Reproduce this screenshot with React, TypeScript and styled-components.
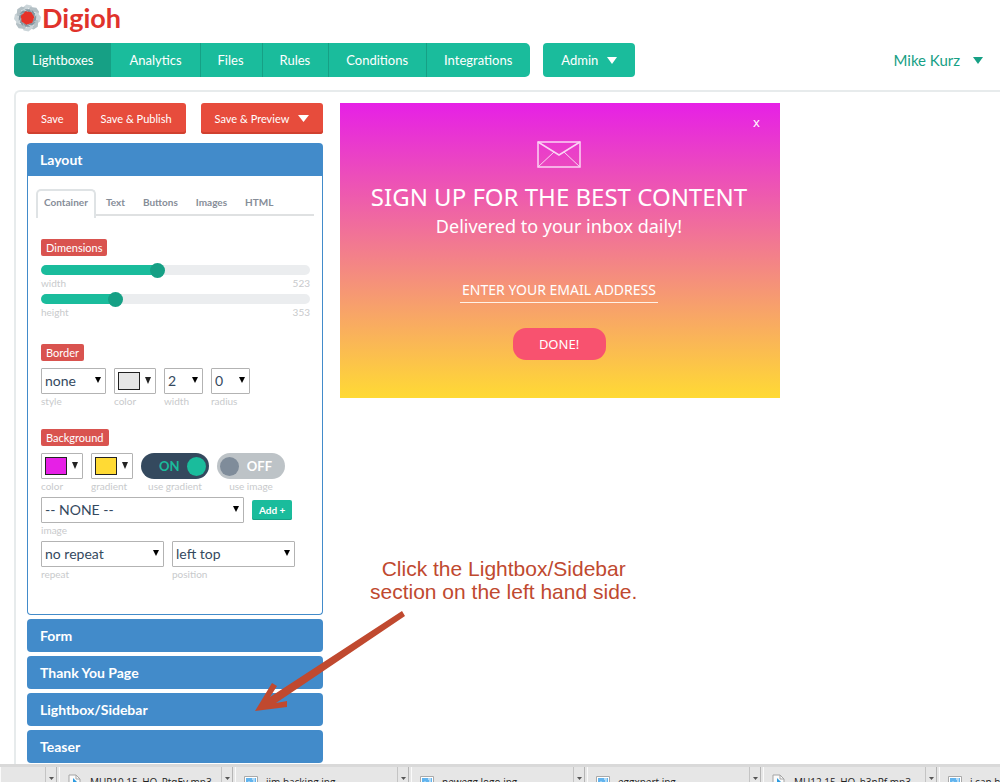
import React, { useState } from "react";
import styled, { createGlobalStyle } from "styled-components";

const GlobalStyle = createGlobalStyle`
  * { box-sizing: border-box; }
  body { margin: 0; background: #fff; color: #34495e; font-family: Lato, "Liberation Sans", sans-serif; }
  button, input, select { font-family: inherit; margin: 0; }
`;

const Window = styled.div`
  display: flex;
  flex-direction: column;
  height: 100vh;
  overflow: hidden;
`;

const Page = styled.div`
  flex: 1;
  min-height: 0;
  display: flex;
  flex-direction: column;
  padding-left: 14px;
  overflow: hidden;
`;

const Brand = styled.a`
  display: flex;
  align-items: center;
  gap: 1px;
  height: 35px;
  flex: none;
  color: #e0322b;
  font-size: 27px;
  line-height: 35px;
  font-weight: 700;
  text-decoration: none;
`;

const NavBar = styled.header`
  display: flex;
  flex: none;
  align-items: center;
  gap: 13px;
  margin: 8px 17px 13px 0;
`;

const NavGroup = styled.nav`
  display: flex;
  border-radius: 5px;
  overflow: hidden;
`;

const NavLink = styled.a<{ $active?: boolean }>`
  padding: 0 18px;
  line-height: 34px;
  font-size: 13px;
  color: #fff;
  text-decoration: none;
  background: ${(p) => (p.$active ? "#16a085" : "#1abc9c")};
  & + & + & { border-left: 1px solid #16a085; padding-left: 17px; }
`;

const AdminButton = styled.button`
  display: flex;
  align-items: center;
  gap: 9px;
  height: 34px;
  padding: 0 18px;
  border: 0;
  border-radius: 4px;
  background: #1abc9c;
  color: #fff;
  font-size: 13px;
`;

const UserButton = styled.button`
  display: flex;
  align-items: center;
  gap: 13px;
  margin-left: auto;
  padding: 0;
  border: 0;
  background: none;
  color: #16a085;
  font-size: 15px;
`;

const Workspace = styled.main`
  position: relative;
  flex: 1;
  display: flex;
  align-items: flex-start;
  gap: 17px;
  padding: 11px 0 0 11px;
  border: 2px solid #e7ebec;
  border-width: 2px 0 0 2px;
  border-radius: 6px 0 0 0;
`;

const Sidebar = styled.aside`
  flex: none;
  width: 296px;
`;

const Actions = styled.div`
  display: flex;
  margin-bottom: 9px;
`;

const ActionButton = styled.button<{ $gap?: number }>`
  display: flex;
  align-items: center;
  justify-content: center;
  gap: 9px;
  height: 31px;
  margin-left: ${(p) => p.$gap ?? 0}px;
  padding: 0 14px 1px;
  border: 0;
  border-radius: 3px;
  background: #e74c3c;
  box-shadow: inset 0 -2px 0 #d0402f;
  color: #fff;
  font-size: 11px;
  white-space: nowrap;
`;

const Section = styled.section`
  margin-bottom: 4px;
`;

const SectionHeader = styled.button<{ $open?: boolean }>`
  display: block;
  width: 100%;
  height: 33px;
  padding: 0 13px;
  border: 0;
  border-radius: ${(p) => (p.$open ? "4px 4px 0 0" : "4px")};
  background: #428bca;
  color: #fff;
  font-size: 14px;
  font-weight: 700;
  text-align: left;
`;

const SectionBody = styled.div`
  padding: 13px 12px 29px 13px;
  border: 1px solid #428bca;
  border-top: 0;
  border-radius: 0 0 4px 4px;
`;

const Tabs = styled.div`
  display: flex;
  gap: 2px;
  margin: 0 -4px 23px -5px;
  align-items: flex-start;
  box-shadow: inset 0 -2px 0 #dfe1e2;
  height: 27px;
`;

const Tab = styled.button<{ $active?: boolean }>`
  height: 29px;
  padding: 0 ${(p) => (p.$active ? 6 : 8)}px ${(p) => (p.$active ? 6 : 4)}px;
  border: 2px solid #dfe3e5;
  border-width: ${(p) => (p.$active ? "2px 2px 0" : "0")};
  border-radius: 5px 5px 0 0;
  background: ${(p) => (p.$active ? "#fff" : "none")};
  color: #868d98;
  font-size: 10px;
  font-weight: 700;
`;

const Badge = styled.h3`
  width: fit-content;
  margin: 0 0 7px;
  padding: 0 5px;
  border-radius: 2px;
  background: #d9534f;
  color: #fff;
  font-size: 11px;
  line-height: 17px;
  font-weight: 400;
`;

const Group = styled.div<{ $space: number }>`
  margin-bottom: ${(p) => p.$space}px;
`;

const Sliders = styled.div`
  display: flex;
  flex-direction: column;
  gap: 4px;
  padding-top: 2px;
`;

const SliderLabel = styled.label`
  display: block;
  color: #c8cacc;
  font-size: 10px;
  line-height: 14px;
`;

const SliderCaption = styled.span`
  display: flex;
  justify-content: space-between;
  padding-top: 1px;
`;

const Range = styled.input`
  appearance: none;
  display: block;
  width: 100%;
  height: 10px;
  border-radius: 5px;
  background: linear-gradient(to right, #1abc9c var(--fill), #ebedef var(--fill));
  &::-webkit-slider-thumb {
    appearance: none;
    width: 15px;
    height: 15px;
    border-radius: 50%;
    background: #16a085;
  }
`;

const FieldRow = styled.div`
  display: flex;
  align-items: flex-start;
  gap: 8px;
  margin-bottom: 4px;
`;

const FieldLabel = styled.label<{ $width: number; $center?: boolean }>`
  display: block;
  width: ${(p) => p.$width}px;
  color: #c8cacc;
  font-size: 10px;
  line-height: 14px;
  text-align: ${(p) => (p.$center ? "center" : "left")};
`;

const ControlBox = styled.span`
  position: relative;
  display: block;
  & > svg { position: absolute; right: 5px; top: 9px; pointer-events: none; }
`;

const SelectBox = styled.select`
  appearance: none;
  display: block;
  width: 100%;
  height: 26px;
  padding: 0 3px 1px;
  border: 1px solid #b3b3b3;
  border-radius: 1px;
  background: #fff;
  color: #34495e;
  font-size: 14px;
`;

const ColorButton = styled.button`
  display: flex;
  align-items: center;
  width: 100%;
  height: 26px;
  padding: 0 3px;
  border: 1px solid #b3b3b3;
  border-radius: 1px;
  background: #fff;
`;

const Swatch = styled.span<{ $color: string }>`
  width: 22px;
  height: 18px;
  border: 1px solid #222;
  background: ${(p) => p.$color};
`;

const SwitchTrack = styled.span<{ $on: boolean }>`
  position: relative;
  display: flex;
  align-items: center;
  justify-content: space-between;
  flex-direction: ${(p) => (p.$on ? "row" : "row-reverse")};
  height: 26px;
  padding: ${(p) => (p.$on ? "0 3px 0 18px" : "0 13px 0 3px")};
  border-radius: 13px;
  background: ${(p) => (p.$on ? "#34495e" : "#bdc3c7")};
  color: ${(p) => (p.$on ? "#1abc9c" : "#fff")};
  font-size: 13px;
  font-weight: 700;
`;

const SwitchInput = styled.input`
  position: absolute;
  inset: 0;
  width: 100%;
  height: 100%;
  opacity: 0;
`;

const SwitchKnob = styled.span<{ $on: boolean }>`
  width: 19px;
  height: 19px;
  border-radius: 50%;
  background: ${(p) => (p.$on ? "#1abc9c" : "#7f8c9a")};
`;

const AddButton = styled.button`
  height: 20px;
  margin-top: 3px;
  padding: 0 7px;
  border: 0;
  border-radius: 2px;
  background: #1abc9c;
  box-shadow: inset 0 -1px 0 #16a085;
  color: #fff;
  font-size: 10px;
  font-weight: 700;
`;

const Popup = styled.form`
  position: relative;
  display: flex;
  flex-direction: column;
  align-items: center;
  width: 440px;
  padding: 38px 21px 38px 19px;
  background: linear-gradient(#e620e6, #ffda34);
  color: #fff;
  font-family: "Noto Sans", "Open Sans", sans-serif;
`;

const CloseButton = styled.button`
  position: absolute;
  top: 10px;
  right: 20px;
  padding: 0;
  border: 0;
  background: none;
  color: #fff;
  font-size: 13px;
  line-height: 18px;
`;

const PopupTitle = styled.h1`
  margin: 13px 0 0;
  font-size: 24px;
  line-height: 32px;
  font-weight: 400;
  white-space: nowrap;
`;

const PopupText = styled.p`
  margin: 0;
  font-size: 18px;
  line-height: 26px;
`;

const EmailInput = styled.input`
  width: 198px;
  height: 27px;
  margin: 37px 0 25px;
  padding: 0;
  border: 0;
  border-bottom: 1px solid #fff2e6;
  background: none;
  color: #fff;
  font-size: 14px;
  text-align: center;
  &::placeholder { color: #fff; opacity: 1; }
`;

const DoneButton = styled.button`
  width: 93px;
  height: 32px;
  border: 0;
  border-radius: 13px;
  background: #f8526f;
  color: #fff;
  font-size: 13px;
`;

const Note = styled.p`
  position: absolute;
  left: 354px;
  top: 465px;
  margin: 0;
  color: #c0492f;
  font-family: "Liberation Sans", sans-serif;
  font-size: 21px;
  line-height: 23px;
  text-align: center;
  white-space: nowrap;
`;

const NoteArrow = styled.svg`
  position: absolute;
  left: 236px;
  top: 516px;
  pointer-events: none;
`;

const Shelf = styled.footer`
  display: flex;
  flex: none;
  height: 18px;
  border-top: 3px solid #d9d9d9;
  background: #e6e6e6;
  overflow: hidden;
`;

const ShelfItem = styled.div`
  display: flex;
  flex: none;
  align-items: center;
  gap: 8px;
  width: 174px;
  height: 30px;
  margin-right: 2px;
  padding-left: 8px;
  border-left: 1px solid #fafafa;
  border-right: 1px solid #b5b5b5;
  color: #222;
  font-family: "Open Sans", "Noto Sans", sans-serif;
  font-size: 10px;
  line-height: 16px;
  white-space: nowrap;
  & > svg { flex: none; }
`;

const ShelfTail = styled(ShelfItem)`
  width: 57px;
`;

const ShelfMenu = styled.button`
  display: flex;
  flex: none;
  justify-content: center;
  width: 11px;
  height: 30px;
  margin-left: auto;
  padding: 10px 0 0;
  border: 0;
  border-left: 1px solid #c4c4c4;
  background: none;
`;

function Caret({ width, height, color }: { width: number; height: number; color: string }) {
  return (
    <svg width={width} height={height} viewBox="0 0 10 10" preserveAspectRatio="none" fill={color} aria-hidden="true">
      <path d="M0 0H10L5 10Z" />
    </svg>
  );
}

function Logo() {
  const turns = [0, 45, 90, 135, 180, 225, 270, 315];
  return (
    <svg width="27" height="28" viewBox="-14 -14 28 28" aria-hidden="true">
      {turns.map((t, i) => (
        <path key={t} d="M-6 -10L-1 -14L4 -13L6 -9L1 -10L-1 -5L-5 -6Z" fill={i % 2 ? "#b4c0c5" : "#cbd5d9"} transform={`rotate(${t})`} />
      ))}
      {turns.map((t) => (
        <path key={t} d="M-3 -9L2 -9L5 -5L1 -6Z" fill="#8496a0" transform={`rotate(${t})`} />
      ))}
      <path d="M-2 -7L4 -6L7 -1L5 5L-1 7L-6 4L-7 -2Z" fill="#e63329" />
    </svg>
  );
}

function Slider({ name, start }: { name: string; start: number }) {
  const min = 85;
  const max = 1105;
  const [value, setValue] = useState(start);
  const fill = { "--fill": `${((value - min) / (max - min)) * 100}%` } as React.CSSProperties;
  return (
    <SliderLabel>
      <Range type="range" min={min} max={max} value={value} style={fill} onChange={(e) => setValue(Number(e.target.value))} />
      <SliderCaption><span>{name}</span><span>{value}</span></SliderCaption>
    </SliderLabel>
  );
}

function Select({ label, value, width }: { label: string; value: string; width: number }) {
  return (
    <FieldLabel $width={width}>
      <ControlBox>
        <SelectBox defaultValue={value}><option>{value}</option></SelectBox>
        <Caret width={6} height={6} color="#000" />
      </ControlBox>
      {label}
    </FieldLabel>
  );
}

function ColorPicker({ label, color }: { label: string; color: string }) {
  return (
    <FieldLabel $width={42}>
      <ControlBox>
        <ColorButton type="button" aria-label={label}><Swatch $color={color} /></ColorButton>
        <Caret width={6} height={7} color="#222" />
      </ControlBox>
      {label}
    </FieldLabel>
  );
}

function Switch({ label, start }: { label: string; start: boolean }) {
  const [on, setOn] = useState(start);
  return (
    <FieldLabel $width={68} $center>
      <SwitchTrack $on={on}>
        <SwitchInput type="checkbox" checked={on} onChange={() => setOn(!on)} />
        <span>{on ? "ON" : "OFF"}</span>
        <SwitchKnob $on={on} />
      </SwitchTrack>
      {label}
    </FieldLabel>
  );
}

function FileIcon({ audio }: { audio: boolean }) {
  return audio ? (
    <svg width="14" height="16" viewBox="0 0 14 16" aria-hidden="true">
      <path d="M1 1H8L12 5V15H1Z" fill="#fbfbfb" stroke="#a5a5a5" />
      <path d="M8 1V5H12" fill="none" stroke="#a5a5a5" />
      <path d="M5 4L9 8L7 8V12H4V10H5Z" fill="#2d9be0" />
    </svg>
  ) : (
    <svg width="14" height="12" viewBox="0 0 14 12" aria-hidden="true">
      <path d="M0.500 0.500H13.500V11.500H0.500Z" fill="#fff" stroke="#a9a9a9" />
      <path d="M2 2H12V8H2Z" fill="#62b4ee" />
      <path d="M8 3H11M9 5H11" stroke="#fff" />
      <path d="M2 8L5 5L8 8Z" fill="#c6e6fa" />
    </svg>
  );
}

const navItems = ["Lightboxes", "Analytics", "Files", "Rules", "Conditions", "Integrations"];
const tabs = ["Container", "Text", "Buttons", "Images", "HTML"];
const closedSections = ["Form", "Thank You Page", "Lightbox/Sidebar", "Teaser"];
const downloads = ["MUP10.15_HQ_PtqEy.mp3", "jim backing.jpg", "newegg logo.jpg", "eggxpert.jpg", "MU12.15_HQ_h3nRf.mp3", "i can has.jpg"];

export default function App() {
  return (
    <Window>
      <GlobalStyle />
      <Page>
        <Brand href="#"><Logo />Digioh</Brand>
        <NavBar>
          <NavGroup>
            {navItems.map((item, i) => <NavLink href="#" key={item} $active={i === 0}>{item}</NavLink>)}
          </NavGroup>
          <AdminButton>Admin <Caret width={10} height={7} color="#fff" /></AdminButton>
          <UserButton>Mike Kurz <Caret width={10} height={7} color="#16a085" /></UserButton>
        </NavBar>
        <Workspace>
          <Sidebar>
            <Actions>
              <ActionButton>Save</ActionButton>
              <ActionButton $gap={9}>Save &amp; Publish</ActionButton>
              <ActionButton $gap={15}>Save &amp; Preview <Caret width={11} height={7} color="#fff" /></ActionButton>
            </Actions>
            <Section>
              <SectionHeader $open>Layout</SectionHeader>
              <SectionBody>
                <Tabs role="tablist">
                  {tabs.map((tab, i) => <Tab key={tab} role="tab" aria-selected={i === 0} $active={i === 0}>{tab}</Tab>)}
                </Tabs>
                <Group $space={25}>
                  <Badge>Dimensions</Badge>
                  <Sliders>
                    <Slider name="width" start={523} />
                    <Slider name="height" start={353} />
                  </Sliders>
                </Group>
                <Group $space={21}>
                  <Badge>Border</Badge>
                  <FieldRow>
                    <Select label="style" value="none" width={65} />
                    <ColorPicker label="color" color="#e6e6e6" />
                    <Select label="width" value="2" width={39} />
                    <Select label="radius" value="0" width={39} />
                  </FieldRow>
                </Group>
                <Badge>Background</Badge>
                <FieldRow>
                  <ColorPicker label="color" color="#e620e6" />
                  <ColorPicker label="gradient" color="#ffda34" />
                  <Switch label="use gradient" start={true} />
                  <Switch label="use image" start={false} />
                </FieldRow>
                <FieldRow>
                  <Select label="image" value="-- NONE --" width={203} />
                  <AddButton>Add +</AddButton>
                </FieldRow>
                <FieldRow>
                  <Select label="repeat" value="no repeat" width={123} />
                  <Select label="position" value="left top" width={123} />
                </FieldRow>
              </SectionBody>
            </Section>
            {closedSections.map((name) => (
              <Section key={name}><SectionHeader>{name}</SectionHeader></Section>
            ))}
          </Sidebar>
          <Popup>
            <CloseButton type="button">x</CloseButton>
            <svg width="44" height="27" viewBox="0 0 44 27" fill="none" stroke="#fbd3f4" strokeWidth="1.500" aria-label="Envelope">
              <path d="M1 1H43V26H1Z" />
              <path d="M1 1L22 14L43 1" />
              <path d="M1 26L17 11M43 26L27 11" strokeWidth="1" />
            </svg>
            <PopupTitle>SIGN UP FOR THE BEST CONTENT</PopupTitle>
            <PopupText>Delivered to your inbox daily!</PopupText>
            <EmailInput type="email" aria-label="Email address" placeholder="ENTER YOUR EMAIL ADDRESS" />
            <DoneButton type="button">DONE!</DoneButton>
          </Popup>
          <Note>Click the Lightbox/Sidebar<br />section on the left hand side.</Note>
          <NoteArrow width="160" height="110" viewBox="0 0 160 110" aria-hidden="true">
            <path d="M150 3L153 8L24 95L35 93L35 99L3 103L20 75L25 78L18 89Z" fill="#c0492f" />
          </NoteArrow>
        </Workspace>
      </Page>
      <Shelf>
        <ShelfTail><ShelfMenu aria-label="File menu"><Caret width={5} height={3} color="#555" /></ShelfMenu></ShelfTail>
        {downloads.map((file) => (
          <ShelfItem key={file}>
            <FileIcon audio={file.endsWith("mp3")} />
            {file}
            <ShelfMenu aria-label="File menu"><Caret width={5} height={3} color="#555" /></ShelfMenu>
          </ShelfItem>
        ))}
      </Shelf>
    </Window>
  );
}
